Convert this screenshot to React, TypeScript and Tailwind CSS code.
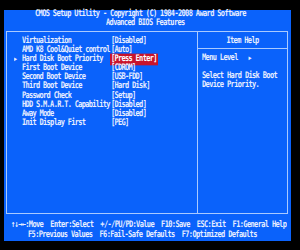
const rows: { label: string; value: string; arrow?: boolean; active?: boolean }[] = [
  { label: "Virtualization", value: "[Disabled]" },
  { label: "AMD K8 Cool&Quiet control", value: "[Auto]" },
  { label: "Hard Disk Boot Priority", value: "[Press Enter]", arrow: true, active: true },
  { label: "First Boot Device", value: "[CDROM]" },
  { label: "Second Boot Device", value: "[USB-FDD]" },
  { label: "Third Boot Device", value: "[Hard Disk]" },
  { label: "Password Check", value: "[Setup]" },
  { label: "HDD S.M.A.R.T. Capability", value: "[Disabled]" },
  { label: "Away Mode", value: "[Disabled]" },
  { label: "Init Display First", value: "[PEG]" },
];

const font = "font-['DejaVu_Sans_Mono',monospace] font-bold text-[7px] tracking-[-0.64px] whitespace-pre";
// bios glyphs are tall and narrow
const tall = "scale-y-[1.3]";

export default function App() {
  return (
    <div className="w-[300px] h-[250px] bg-black pt-[10px] pl-[4px] overflow-hidden">
      <div className={`w-[287px] h-[231px] bg-[#0a62fb] text-[#e8eeff] flex flex-col ${font}`}>
        {/* title */}
        <div className={`leading-[9px] pl-[31px] ${tall}`}>CMOS Setup Utility - Copyright (C) 1984-2008 Award Software</div>
        <div className={`leading-[9px] pl-[102px] ${tall}`}>Advanced BIOS Features</div>

        {/* main box */}
        <div className="mt-[3px] ml-[2px] w-[282px] h-[183px] border border-[#aacaff] flex">
          <div className="w-[191px] border-r border-[#aacaff] pt-[5px]">
            {rows.map((r) => (
              <div key={r.label} className={`flex leading-[9.1px] h-[9.1px] tracking-[-0.7px] ${tall}`}>
                <span className="w-[15px] pl-[7px] text-[5px]">{r.arrow ? "▶" : ""}</span>
                <span className="w-[89px]">{r.label}</span>
                <span className={r.active ? "bg-[#c8142c] text-white px-[1px] -ml-[1px]" : ""}>{r.value}</span>
              </div>
            ))}
          </div>
          <div className="flex-1 flex flex-col">
            <div className="h-[17px] border-b border-[#aacaff] flex items-center justify-center">
              <span className={`inline-block ${tall}`}>Item Help</span>
            </div>
            <div className="pl-[4px] pt-[5px] leading-[9px]">
              <div className={tall}>Menu Level   <span className="text-[5px]">▶</span></div>
              <div className={`mt-[9px] ${tall}`}>Select Hard Disk Boot</div>
              <div className={tall}>Device Priority.</div>
            </div>
          </div>
        </div>

        {/* footer */}
        <div className={`mt-[5px] leading-[10px] pl-[7px] ${tall}`}>↑↓→←:Move  Enter:Select  +/-/PU/PD:Value  F10:Save  ESC:Exit  F1:General Help</div>
        <div className={`leading-[10px] pl-[24px] ${tall}`}>F5:Previous Values  F6:Fail-Safe Defaults  F7:Optimized Defaults</div>
      </div>
    </div>
  );
}
